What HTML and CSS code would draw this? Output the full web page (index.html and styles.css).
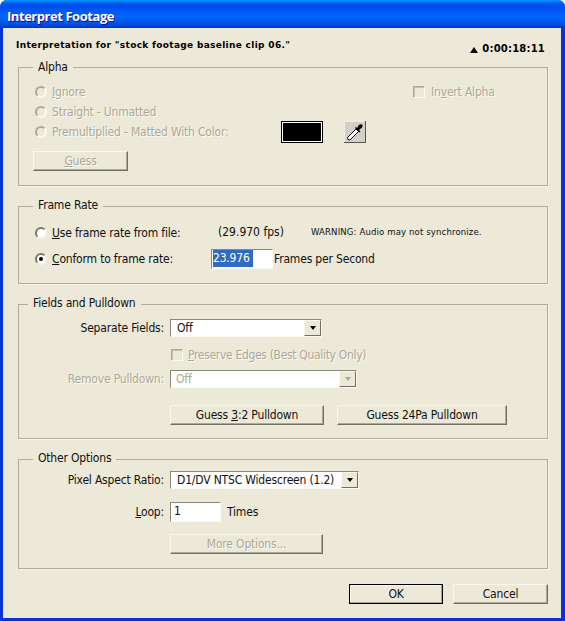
FILE: index.html
```html
<!DOCTYPE html>
<html lang="en">
<head>
<meta charset="utf-8">
<title>Interpret Footage</title>
<link rel="stylesheet" href="styles.css">
</head>
<body>
<div class="window">
  <div class="titlebar">Interpret Footage</div>
  <div class="client">
    <div class="header">
      <div class="source">Interpretation for "stock footage baseline clip 06."</div>
      <div class="timecode"><span class="delta"></span>0:00:18:11</div>
    </div>

    <section class="group alpha">
      <div class="legend">Alpha</div>
      <div class="row row-alpha off">
        <span class="radio"></span><span class="alpha-label"><u>I</u>gnore</span>
        <span class="check"></span><span class="invert">In<u>v</u>ert Alpha</span>
      </div>
      <div class="row row-alpha off">
        <span class="radio"></span><span class="alpha-label">Straight - Unmatted</span>
      </div>
      <div class="row row-alpha off">
        <span class="radio"></span><span class="alpha-label">Premultiplied - Matted With Color:</span>
        <span class="swatch"></span>
        <span class="dropper">
          <svg width="22" height="22" viewBox="0 0 22 22">
            <path d="M4 18.5 L3.5 16.5 L12 8 L14.5 10.5 L6 19 Z" fill="#fff" stroke="#000" stroke-width="1"/>
            <path d="M11 7 L15.5 11.5 L16.5 10.5 L15 9 L18 6.5 Q19.5 4.5 18 3.5 Q16.5 2.5 14.5 4.5 L13 7 L12 6 Z" fill="#000"/>
          </svg>
        </span>
      </div>
      <button class="btn btn-guess off-btn" type="button"><u>G</u>uess</button>
    </section>

    <section class="group framerate">
      <div class="legend legend-up">Frame Rate</div>
      <div class="row row-rate">
        <span class="radio"></span><span class="rate-label"><u>U</u>se frame rate from file:</span>
        <span class="fps">(29.970 fps)</span>
        <span class="warning">WARNING: Audio may not synchronize.</span>
      </div>
      <div class="row row-rate">
        <span class="radio radio-on"></span><span class="conform-label"><u>C</u>onform to frame rate:</span>
        <span class="input input-rate"><span class="selected">23.976</span></span>
        <span class="fps-unit">Frames per Second</span>
      </div>
    </section>

    <section class="group fields">
      <div class="legend legend-up legend-wide">Fields and Pulldown</div>
      <div class="row form-row row-sep">
        <span class="form-label">Separate Fields:</span>
        <span class="select select-sep">Off<span class="arrow"></span></span>
      </div>
      <div class="row form-row row-preserve off">
        <span class="check"></span><span class="preserve"><u>P</u>reserve Edges (Best Quality Only)</span>
      </div>
      <div class="row form-row row-remove off">
        <span class="form-label">Remove Pulldown:</span>
        <span class="select select-remove">Off<span class="arrow"></span></span>
      </div>
      <div class="row form-row row-buttons">
        <button class="btn btn-32" type="button">Guess <u>3</u>:2 Pulldown</button>
        <button class="btn btn-24" type="button">Guess 24Pa Pulldown</button>
      </div>
    </section>

    <section class="group other">
      <div class="legend legend-up">Other Options</div>
      <div class="row form-row row-par">
        <span class="form-label">Pixel Aspect Ratio:</span>
        <span class="select select-par">D1/DV NTSC Widescreen (1.2)<span class="arrow"></span></span>
      </div>
      <div class="row form-row row-loop">
        <span class="form-label"><u>L</u>oop:</span>
        <span class="input input-loop">1</span>
        <span class="times">Times</span>
      </div>
      <div class="row form-row row-more">
        <button class="btn btn-more off-btn" type="button">More Options...</button>
      </div>
    </section>

    <div class="footer">
      <button class="btn btn-ok" type="button">OK</button>
      <button class="btn btn-cancel" type="button">Cancel</button>
    </div>
  </div>
</div>
</body>
</html>
```
FILE: styles.css
```css
* { box-sizing: border-box; }
html, body { margin: 0; padding: 0; }
body {
  width: 565px;
  height: 621px;
  background: #fff;
  overflow: hidden;
  font: 12px/14px "DejaVu Sans Condensed", "DejaVu Sans", sans-serif;
  letter-spacing: -0.18px;
  color: #111;
}
u { text-decoration: underline; }

.window {
  width: 565px;
  height: 621px;
  display: flex;
  flex-direction: column;
  background: #0831d9;
  border-radius: 7px 7px 0 0;
  overflow: hidden;
}
.titlebar {
  height: 28px;
  padding: 9px 0 0 7px;
  flex: none;
  background: linear-gradient(to bottom, #0997ff 0, #0053ee 4px, #0050ee 8px, #0066ff 16px, #0058ee 22px, #0040c8 27px, #0034a8 28px);
  color: #fff;
  font: bold 13px/14px "Open Sans", "Noto Sans", sans-serif;
  letter-spacing: -0.45px;
  text-shadow: 1px 1px 0 #0f1089;
}
.client {
  flex: none;
  height: 590px;
  margin: 0 4px 0 3px;
  padding: 0 13px 0 15px;
  background: #ece9d8;
  display: flex;
  flex-direction: column;
}

.header {
  height: 39px;
  flex: none;
  display: flex;
  justify-content: space-between;
  padding-right: 3px;
  font: bold 9px/12px "DejaVu Sans", sans-serif;
  color: #000;
}
.source { padding-top: 11px; letter-spacing: 0.32px; margin-left: -2px; }
.timecode {
  padding-top: 15px;
  display: flex;
  font-size: 10px;
  letter-spacing: 0.2px;
}
.delta {
  width: 0;
  height: 0;
  margin: 4px 4px 0 0;
  border-left: 4px solid transparent;
  border-right: 4px solid transparent;
  border-bottom: 6px solid #000;
}

.group {
  position: relative;
  flex: none;
  margin-bottom: 20px;
  border: 1px solid #aeac9c;
  box-shadow: 1px 1px 0 #f8f6ea;
}
.alpha { height: 119px; padding: 14px 0 0 16px; }
.framerate { height: 78px; padding: 16px 0 0 16px; }
.fields { height: 135px; padding: 13px 0 0 151px; }
.other { height: 110px; padding: 11px 0 0 151px; margin-bottom: 15px; }
.legend {
  position: absolute;
  top: -8px;
  left: 14px;
  padding: 0 5px;
  background: #ece9d8;
  line-height: 15px;
}
.legend-up { top: -9px; }
.legend-wide { left: 9px; }

.row { display: flex; align-items: center; }
.off { color: #aca899; text-shadow: 1px 1px 0 #fbfaf2; }

.radio {
  position: relative;
  flex: none;
  width: 12px;
  height: 12px;
  margin-right: 5px;
  border-radius: 50%;
  background: #fff;
  border: 2px solid;
  border-color: #7a7868 #f5f4ea #f5f4ea #7a7868;
}
.off .radio {
  background: #ece9d8;
  border-color: #aca899 #fbfaf2 #fbfaf2 #aca899;
}
.radio-on::after {
  content: "";
  position: absolute;
  left: 2px;
  top: 2px;
  width: 4px;
  height: 4px;
  border-radius: 50%;
  background: #000;
}
.check {
  flex: none;
  width: 12px;
  height: 12px;
  border: 1px solid;
  border-color: #aca899 #fbfaf2 #fbfaf2 #aca899;
  box-shadow: inset 1px 1px 0 #c5c2b2;
}

.btn {
  display: block;
  height: 20px;
  padding: 0;
  background: #ece9d8;
  border: 1px solid;
  border-color: #f8f7ee #716f64 #716f64 #f8f7ee;
  box-shadow: inset -1px -1px 0 #aca899;
  font: inherit;
  letter-spacing: inherit;
  color: #111;
  text-align: center;
}
.off-btn { color: #aca899; text-shadow: 1px 1px 0 #fbfaf2; }

/* Alpha */
.row-alpha { height: 20px; }
.alpha-label { width: 229px; }
.legend + .row-alpha .check { margin-left: 132px; }
.invert { margin-left: 6px; }
.swatch {
  flex: none;
  width: 42px;
  height: 22px;
  background: #000;
  border: 1px solid #000;
  box-shadow: inset 0 0 0 1px #fff;
}
.dropper {
  flex: none;
  width: 22px;
  height: 22px;
  margin-left: 21px;
  background: #d4d0c8;
  box-shadow: inset -1px -1px 0 #555, inset 1px 1px 0 #f0eee6;
}
.dropper svg { display: block; }
.btn-guess { width: 95px; margin: 9px 0 0 -2px; }

/* Frame rate */
.row-rate { height: 20px; }
.row-rate + .row-rate { margin-top: 6px; }
.rate-label { width: 166px; }
.conform-label { width: 159px; }
.fps { width: 93px; margin-top: -2px; letter-spacing: 0; }
.warning { font-size: 9.5px; letter-spacing: 0.13px; margin-top: -2px; }
.input {
  flex: none;
  display: block;
  background: #fff;
  border: 1px solid;
  border-color: #8a8878 #fbfaf2 #fbfaf2 #8a8878;
  line-height: 16px;
}
.input-rate { width: 62px; height: 20px; padding-left: 1px; }
.selected { display: inline-block; background: #316ac5; color: #fff; height: 17px; padding-right: 3px; }
.fps-unit { margin-left: 1px; }

/* Form rows */
.form-row { position: relative; }
.form-label {
  position: absolute;
  right: 100%;
  margin-right: 6px;
  white-space: nowrap;
}
.select {
  position: relative;
  display: block;
  flex: none;
  background: #fff;
  border: 1px solid;
  border-color: #8a8878 #fbfaf2 #fbfaf2 #8a8878;
  padding-left: 6px;
  line-height: 17px;
}
.arrow {
  position: absolute;
  right: 0;
  top: 0;
  width: 17px;
  bottom: 0;
  background: #ece9d8;
  border: 1px solid;
  border-color: #f8f7ee #716f64 #716f64 #f8f7ee;
}
.arrow::after {
  content: "";
  position: absolute;
  left: 5px;
  top: 5px;
  border-left: 3px solid transparent;
  border-right: 3px solid transparent;
  border-top: 4px solid #000;
}
.off .arrow::after { border-top-color: #aca899; }
.select-sep { width: 152px; height: 18px; }
.row-sep { height: 20px; }
.row-preserve { height: 12px; margin-top: 11px; padding-left: 1px; }
.preserve { margin-left: 5px; letter-spacing: -0.32px; }
.row-remove { height: 18px; margin-top: 9px; }
.select-remove { width: 187px; height: 18px; padding-left: 5px; }
.row-buttons { margin-top: 17px; gap: 13px; }
.btn-32 { width: 154px; }
.btn-24 { width: 170px; }

/* Other */
.row-par { height: 18px; }
.select-par { width: 189px; height: 18px; }
.row-loop { height: 20px; margin-top: 13px; }
.input-loop { width: 51px; height: 20px; padding-left: 3px; line-height: 17px; }
.times { margin-left: 6px; }
.row-more { margin-top: 12px; }
.btn-more { width: 153px; }

/* Footer */
.footer { display: flex; justify-content: flex-end; gap: 10px; }
.btn-ok { width: 94px; border: 1px solid #000; box-shadow: inset -1px -1px 0 #aca899, inset 1px 1px 0 #f8f7ee; }
.btn-cancel { width: 95px; }
```
